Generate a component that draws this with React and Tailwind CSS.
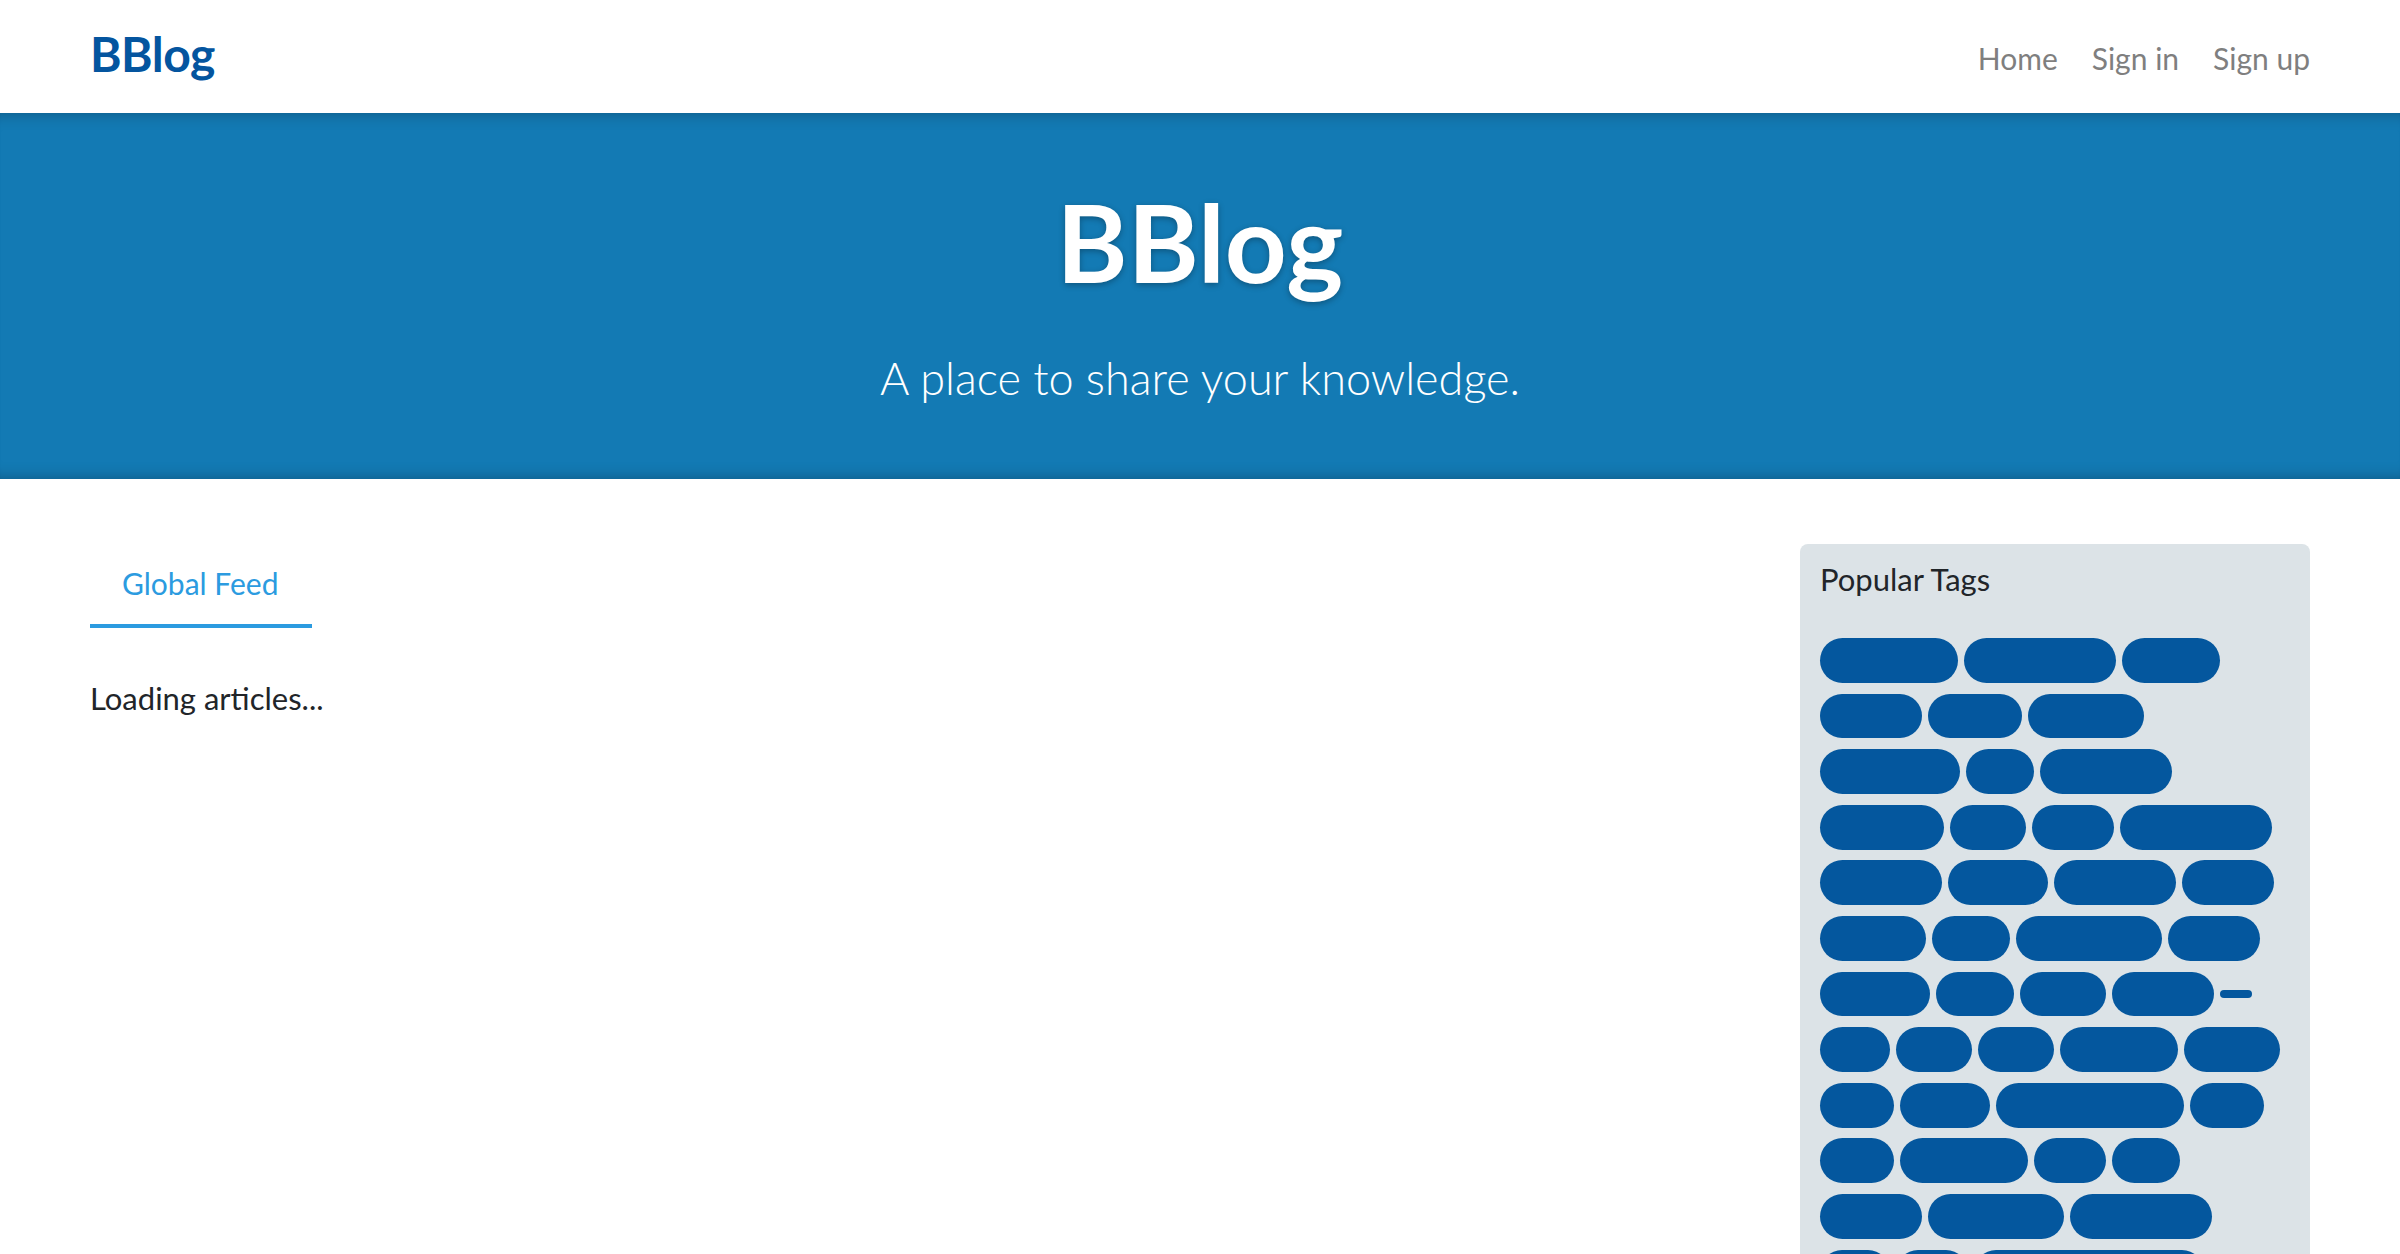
import React from "react";

const ROWS = [
  [138, 152, 98],
  [102, 94, 116],
  [140, 68, 132],
  [124, 76, 82, 152],
  [122, 100, 122, 92],
  [106, 78, 146, 92],
  [110, 78, 86, 102, 0],
  [70, 76, 76, 118, 96],
  [74, 90, 188, 74],
  [74, 128, 72, 68],
  [102, 136, 142],
  [70, 72, 230],
];

function Pill({ w }) {
  if (w === 0) {
    return <span className="block self-center h-[8px] w-[32px] rounded-full bg-[#04579e]" />;
  }
  return <span className="block h-[44.8px] rounded-full bg-[#04579e]" style={{ width: w }} />;
}

export default function App() {
  return (
    <div className="min-h-screen bg-white text-[#212529] font-['Lato','Liberation_Sans',sans-serif]">
      <nav className="h-[113px] bg-white">
        <div className="mx-auto max-w-[2280px] px-[30px] pt-[32px] flex items-start justify-between">
          <a className="text-[48px] leading-[44px] font-bold text-[#04559f] tracking-[-0.5px]">BBlog</a>
          <ul className="mt-[4px] flex items-baseline gap-[34px] text-[30px] leading-[44px] text-[#7f7f7f]">
            <li>Home</li>
            <li>Sign in</li>
            <li>Sign up</li>
          </ul>
        </div>
      </nav>

      <section className="h-[366px] bg-[#137ab4] text-white text-center shadow-[inset_0_16px_16px_-16px_rgba(0,0,0,0.3),inset_0_-16px_16px_-16px_rgba(0,0,0,0.3)] pt-[66px]">
        <h1 className="text-[108px] leading-[124px] font-bold [text-shadow:0_2px_6px_rgba(0,0,0,0.3)]">BBlog</h1>
        <p className="mt-[42px] text-[45px] leading-[66px] font-light">A place to share your knowledge.</p>
      </section>

      <main className="mx-auto max-w-[2280px] px-[30px] pt-[65px] grid grid-cols-[1650px_510px] gap-x-[60px]">
        <div>
          <div className="flex">
            <div className="w-[222px] pl-[32px] pt-[15px] pb-[17px] border-b-4 border-[#2b9be0] text-[30px] leading-[48px] text-[#2b9be0]">
              Global Feed
            </div>
          </div>
          <div className="mt-[46px] text-[31px] leading-[48px] text-[#212529]">Loading articles...</div>
        </div>

        <aside className="self-start rounded-[8px] bg-[#dce3e7] px-[20px] pt-[11px] pb-[20px]">
          <p className="text-[31px] leading-[48px] text-[#212529]">Popular Tags</p>
          <div className="mt-[35px] flex flex-col gap-y-[10.8px]">
            {ROWS.map((row, i) => (
              <div key={i} className="flex gap-x-[6px]">
                {row.map((w, j) => (
                  <Pill key={j} w={w} />
                ))}
              </div>
            ))}
          </div>
        </aside>
      </main>
    </div>
  );
}
